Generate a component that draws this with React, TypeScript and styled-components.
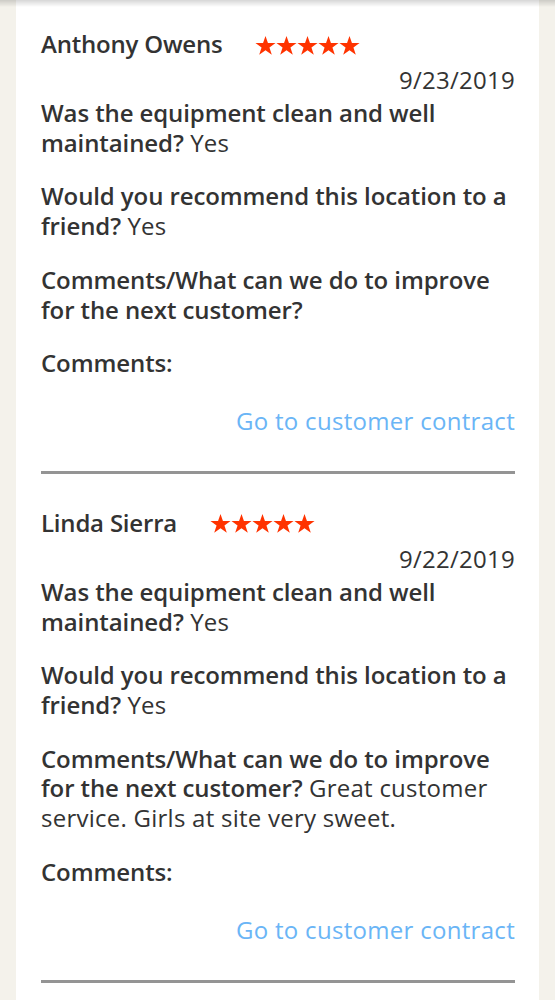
import React from "react";
import styled, { createGlobalStyle } from "styled-components";

const GlobalStyle = createGlobalStyle`
  html, body {
    margin: 0;
    padding: 0;
    background: #f4f2eb;
  }
  body {
    font-family: "Open Sans", "Noto Sans", sans-serif;
    color: #333333;
    -webkit-font-smoothing: antialiased;
  }
`;

const TopShadow = styled.div`
  position: fixed;
  top: 0;
  left: 0;
  right: 0;
  height: 7px;
  background: linear-gradient(to bottom, rgba(0, 0, 0, 0.16), rgba(0, 0, 0, 0));
  pointer-events: none;
`;

const Card = styled.main`
  margin: 0 16px;
  background: #ffffff;
  padding: 29px 24px 16px 25px;
  min-height: 1000px;
  box-sizing: border-box;
`;

const Review = styled.article`
  display: flex;
  flex-direction: column;
`;

const HeaderRow = styled.div`
  display: flex;
  align-items: center;
  height: 30px;
`;

const Name = styled.h3`
  margin: 0;
  font-size: 24px;
  line-height: 30px;
  font-weight: 600;
  letter-spacing: -0.2px;
  color: #333333;
`;

const Stars = styled.div`
  display: flex;
  margin-left: 33px;
  margin-top: 2px;
`;

const DateLine = styled.div`
  margin-top: 6px;
  text-align: right;
  font-size: 24px;
  line-height: 30px;
  font-weight: 400;
  letter-spacing: 0.25px;
  color: #333333;
`;

const QA = styled.p<{ $first?: boolean }>`
  margin: ${(p) => (p.$first ? "3px" : "24px")} 0 0 0;
  font-size: 24px;
  line-height: 29.7px;
  color: #333333;
`;

const Question = styled.span`
  font-weight: 600;
  letter-spacing: -0.1px;
`;

const Answer = styled.span`
  font-weight: 400;
  letter-spacing: 0.25px;
`;

const LinkRow = styled.div`
  margin-top: 28px;
  display: flex;
  justify-content: flex-end;
`;

const ContractLink = styled.a`
  font-size: 24px;
  line-height: 30px;
  color: #6ab5f6;
  letter-spacing: 0.3px;
  text-decoration: none;
`;

const Divider = styled.hr`
  margin: 35px 0 34px 0;
  border: none;
  height: 3px;
  background: #949494;
`;

const Star: React.FC = () => (
  <svg width="21" height="21" viewBox="0 0 24 23" aria-hidden="true">
    <path
      d="M12 0.5l2.8 8.2h8.7l-7 5.1 2.7 8.3L12 17 4.8 22.1l2.7-8.3-7-5.1h8.7z"
      fill="#ff3300"
    />
  </svg>
);

type Item = { q: string; a?: string };

type ReviewData = {
  name: string;
  date: string;
  items: Item[];
};

const reviews: ReviewData[] = [
  {
    name: "Anthony Owens",
    date: "9/23/2019",
    items: [
      { q: "Was the equipment clean and well maintained?", a: "Yes" },
      { q: "Would you recommend this location to a friend?", a: "Yes" },
      { q: "Comments/What can we do to improve for the next customer?" },
      { q: "Comments:" },
    ],
  },
  {
    name: "Linda Sierra",
    date: "9/22/2019",
    items: [
      { q: "Was the equipment clean and well maintained?", a: "Yes" },
      { q: "Would you recommend this location to a friend?", a: "Yes" },
      {
        q: "Comments/What can we do to improve for the next customer?",
        a: "Great customer service. Girls at site very sweet.",
      },
      { q: "Comments:" },
    ],
  },
];

export default function App() {
  return (
    <>
      <GlobalStyle />
      <TopShadow />
      <Card>
        {reviews.map((r) => (
          <Review key={r.name}>
            <HeaderRow>
              <Name>{r.name}</Name>
              <Stars>
                {[0, 1, 2, 3, 4].map((i) => (
                  <Star key={i} />
                ))}
              </Stars>
            </HeaderRow>
            <DateLine>{r.date}</DateLine>
            {r.items.map((it, i) => (
              <QA key={i} $first={i === 0}>
                <Question>{it.q}</Question>
                {it.a ? <Answer> {it.a}</Answer> : null}
              </QA>
            ))}
            <LinkRow>
              <ContractLink href="#">Go to customer contract</ContractLink>
            </LinkRow>
            <Divider />
          </Review>
        ))}
      </Card>
    </>
  );
}
